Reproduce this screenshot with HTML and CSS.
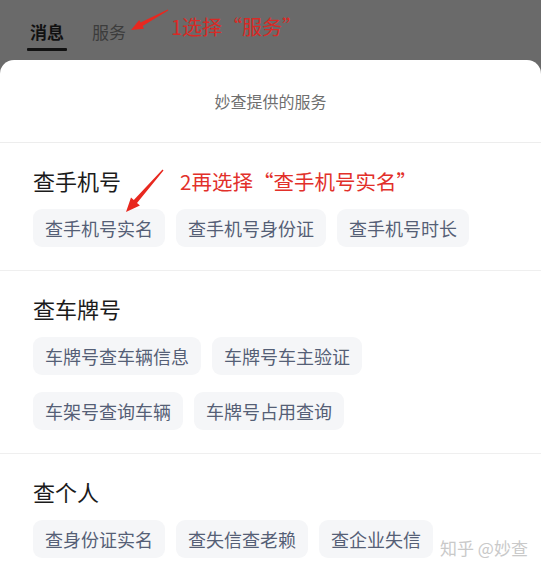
FILE: index.html
```html
<!DOCTYPE html>
<html lang="zh-CN">
<head>
<meta charset="utf-8">
<title>妙查提供的服务</title>
<link rel="stylesheet" href="styles.css">
</head>
<body>
<div class="page">
  <div class="topbar">
    <div class="tab active">消息</div>
    <div class="tab">服务</div>
  </div>
  <div class="sheet">
    <div class="sheet-head">妙查提供的服务</div>
    <section class="group">
      <h2 class="group-title">查手机号</h2>
      <div class="chips">
        <span class="chip">查手机号实名</span>
        <span class="chip">查手机号身份证</span>
        <span class="chip">查手机号时长</span>
      </div>
    </section>
    <section class="group">
      <h2 class="group-title">查车牌号</h2>
      <div class="chips">
        <span class="chip">车牌号查车辆信息</span>
        <span class="chip">车牌号车主验证</span>
        <span class="chip">车架号查询车辆</span>
        <span class="chip">车牌号占用查询</span>
      </div>
    </section>
    <section class="group">
      <h2 class="group-title">查个人</h2>
      <div class="chips">
        <span class="chip">查身份证实名</span>
        <span class="chip">查失信查老赖</span>
        <span class="chip">查企业失信</span>
      </div>
    </section>
  </div>

  <div class="note note-1">1选择“服务”</div>
  <div class="note note-2">2再选择“查手机号实名”</div>
  <svg class="arrows" width="541" height="572" viewBox="0 0 541 572" aria-hidden="true">
    <polygon fill="#e8281f" points="168.2,10.4 142.6,26.1 144,28.7 131,30 139.2,19.9 140.6,22.5 167.8,9.6"/>
    <polygon fill="#e8281f" points="163.5,170.4 137,203.1 139.9,205.6 126,212 131,197.6 133.8,200.1 162.5,169.6"/>
  </svg>
  <div class="watermark">知乎 @妙查</div>
</div>
</body>
</html>
```
FILE: styles.css
```css
* { box-sizing: border-box; }
html, body { margin: 0; padding: 0; }
body {
  width: 541px;
  height: 572px;
  overflow: hidden;
  background: #6a6a6a;
  font-family: "Noto Sans CJK SC", "Noto Sans", sans-serif;
}
.page {
  position: relative;
  width: 541px;
  height: 572px;
  display: flex;
  flex-direction: column;
}
.topbar {
  flex: 0 0 60px;
  height: 60px;
  background: #6a6a6a;
  display: flex;
  align-items: flex-start;
  gap: 28px;
  padding: 20px 0 0 30px;
}
.tab {
  font-size: 17px;
  line-height: 24px;
  color: #3c3c3c;
  position: relative;
}
.tab.active {
  color: #111;
  font-weight: 700;
}
.tab.active::after {
  content: "";
  position: absolute;
  left: -3px;
  right: -3px;
  top: 28px;
  height: 3px;
  background: #111;
  border-radius: 1px;
}
.sheet {
  flex: 1 0 auto;
  background: #fff;
  border-radius: 14px 14px 0 0;
}
.sheet-head {
  height: 83px;
  display: flex;
  align-items: center;
  justify-content: center;
  font-size: 16px;
  color: #6f6f6f;
  border-bottom: 1px solid #ededed;
}
.group {
  padding: 22px 32px 23px 33px;
  border-bottom: 1px solid #efefef;
}
.group:last-child { border-bottom: none; }
.group-title {
  margin: 0;
  font-size: 22px;
  line-height: 30px;
  font-weight: 400;
  color: #1b1b1b;
}
.chips {
  margin-top: 14px;
  display: flex;
  flex-wrap: wrap;
  gap: 17px 11px;
}
.chip {
  height: 38px;
  line-height: 38px;
  padding: 0 12px;
  background: #f5f6f8;
  border-radius: 9px;
  font-size: 18px;
  color: #555f76;
}
.note {
  position: absolute;
  color: #e2302a;
  white-space: nowrap;
}
.note-1 {
  left: 171px;
  top: 13px;
  font-size: 20px;
  line-height: 28px;
  color: #d82a26;
}
.note-2 {
  left: 180px;
  top: 167px;
  font-size: 20.5px;
  line-height: 28px;
}
.arrows {
  position: absolute;
  left: 0;
  top: 0;
  pointer-events: none;
}
.watermark {
  position: absolute;
  left: 440px;
  top: 537px;
  font-size: 17px;
  line-height: 22px;
  color: #c9c9c9;
  white-space: nowrap;
}
```
